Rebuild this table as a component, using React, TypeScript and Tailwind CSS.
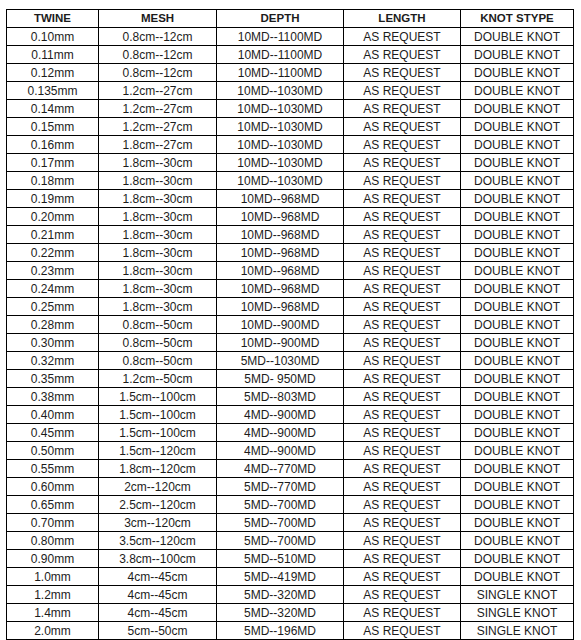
import React from "react"

type Row = [string, string, string, string, string]

const rows: Row[] = [
  ["0.10mm", "0.8cm--12cm", "10MD--1100MD", "AS REQUEST", "DOUBLE KNOT"],
  ["0.11mm", "0.8cm--12cm", "10MD--1100MD", "AS REQUEST", "DOUBLE KNOT"],
  ["0.12mm", "0.8cm--12cm", "10MD--1100MD", "AS REQUEST", "DOUBLE KNOT"],
  ["0.135mm", "1.2cm--27cm", "10MD--1030MD", "AS REQUEST", "DOUBLE KNOT"],
  ["0.14mm", "1.2cm--27cm", "10MD--1030MD", "AS REQUEST", "DOUBLE KNOT"],
  ["0.15mm", "1.2cm--27cm", "10MD--1030MD", "AS REQUEST", "DOUBLE KNOT"],
  ["0.16mm", "1.8cm--27cm", "10MD--1030MD", "AS REQUEST", "DOUBLE KNOT"],
  ["0.17mm", "1.8cm--30cm", "10MD--1030MD", "AS REQUEST", "DOUBLE KNOT"],
  ["0.18mm", "1.8cm--30cm", "10MD--1030MD", "AS REQUEST", "DOUBLE KNOT"],
  ["0.19mm", "1.8cm--30cm", "10MD--968MD", "AS REQUEST", "DOUBLE KNOT"],
  ["0.20mm", "1.8cm--30cm", "10MD--968MD", "AS REQUEST", "DOUBLE KNOT"],
  ["0.21mm", "1.8cm--30cm", "10MD--968MD", "AS REQUEST", "DOUBLE KNOT"],
  ["0.22mm", "1.8cm--30cm", "10MD--968MD", "AS REQUEST", "DOUBLE KNOT"],
  ["0.23mm", "1.8cm--30cm", "10MD--968MD", "AS REQUEST", "DOUBLE KNOT"],
  ["0.24mm", "1.8cm--30cm", "10MD--968MD", "AS REQUEST", "DOUBLE KNOT"],
  ["0.25mm", "1.8cm--30cm", "10MD--968MD", "AS REQUEST", "DOUBLE KNOT"],
  ["0.28mm", "0.8cm--50cm", "10MD--900MD", "AS REQUEST", "DOUBLE KNOT"],
  ["0.30mm", "0.8cm--50cm", "10MD--900MD", "AS REQUEST", "DOUBLE KNOT"],
  ["0.32mm", "0.8cm--50cm", "5MD--1030MD", "AS REQUEST", "DOUBLE KNOT"],
  ["0.35mm", "1.2cm--50cm", "5MD- 950MD", "AS REQUEST", "DOUBLE KNOT"],
  ["0.38mm", "1.5cm--100cm", "5MD--803MD", "AS REQUEST", "DOUBLE KNOT"],
  ["0.40mm", "1.5cm--100cm", "4MD--900MD", "AS REQUEST", "DOUBLE KNOT"],
  ["0.45mm", "1.5cm--100cm", "4MD--900MD", "AS REQUEST", "DOUBLE KNOT"],
  ["0.50mm", "1.5cm--120cm", "4MD--900MD", "AS REQUEST", "DOUBLE KNOT"],
  ["0.55mm", "1.8cm--120cm", "4MD--770MD", "AS REQUEST", "DOUBLE KNOT"],
  ["0.60mm", "2cm--120cm", "5MD--770MD", "AS REQUEST", "DOUBLE KNOT"],
  ["0.65mm", "2.5cm--120cm", "5MD--700MD", "AS REQUEST", "DOUBLE KNOT"],
  ["0.70mm", "3cm--120cm", "5MD--700MD", "AS REQUEST", "DOUBLE KNOT"],
  ["0.80mm", "3.5cm--120cm", "5MD--700MD", "AS REQUEST", "DOUBLE KNOT"],
  ["0.90mm", "3.8cm--100cm", "5MD--510MD", "AS REQUEST", "DOUBLE KNOT"],
  ["1.0mm", "4cm--45cm", "5MD--419MD", "AS REQUEST", "DOUBLE KNOT"],
  ["1.2mm", "4cm--45cm", "5MD--320MD", "AS REQUEST", "SINGLE KNOT"],
  ["1.4mm", "4cm--45cm", "5MD--320MD", "AS REQUEST", "SINGLE KNOT"],
  ["2.0mm", "5cm--50cm", "5MD--196MD", "AS REQUEST", "SINGLE KNOT"],
]

const headers = ["TWINE", "MESH", "DEPTH", "LENGTH", "KNOT STYPE"]

export default function App() {
  return (
    <div className="w-[581px] h-[640px] bg-white overflow-hidden pl-[6px] pt-[9px] font-['Liberation_Sans',Arial,sans-serif] text-[12px] text-[#1c1c1c]">
      {/* spec table */}
      <div className="w-[568px] grid grid-cols-[91px_117px_126px_116px_112px] auto-rows-[17px] gap-px p-px bg-black">
        {headers.map((h) => (
          <div key={h} className="bg-white flex items-center justify-center font-bold text-[11.5px] leading-none">
            {h}
          </div>
        ))}
        {rows.map((r, i) =>
          r.map((c, j) => (
            <div key={`${i}-${j}`} className="bg-white flex items-center justify-center leading-none whitespace-pre">
              {c}
            </div>
          ))
        )}
      </div>
    </div>
  )
}
